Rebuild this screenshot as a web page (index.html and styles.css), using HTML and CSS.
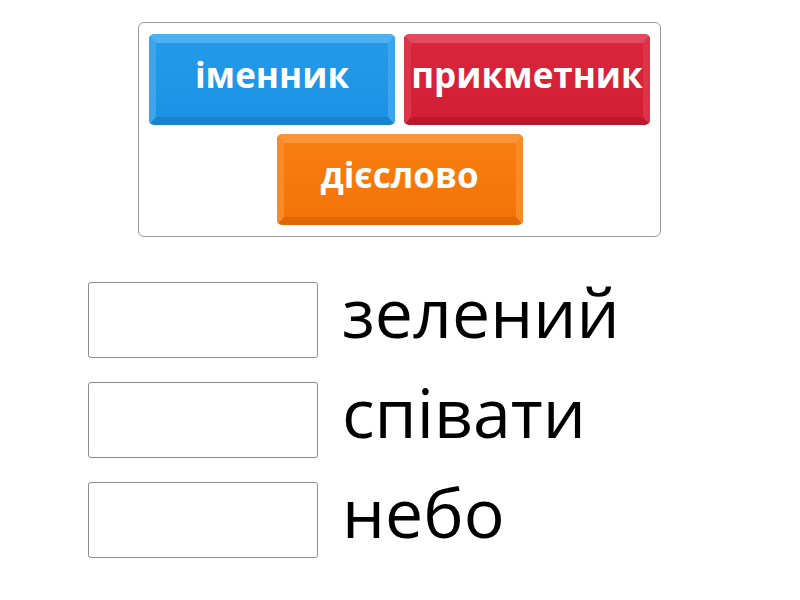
FILE: index.html
```html
<!DOCTYPE html>
<html lang="uk">
<head>
<meta charset="utf-8">
<title>Групування</title>
<link rel="stylesheet" href="styles.css">
</head>
<body>
<div class="page">
  <div class="bank">
    <div class="bank-row">
      <div class="tile tile-blue">іменник</div>
      <div class="tile tile-red">прикметник</div>
    </div>
    <div class="bank-row">
      <div class="tile tile-orange">дієслово</div>
    </div>
  </div>
  <div class="answers">
    <div class="answer"><div class="slot"></div><div class="word">зелений</div></div>
    <div class="answer"><div class="slot"></div><div class="word">співати</div></div>
    <div class="answer"><div class="slot"></div><div class="word">небо</div></div>
  </div>
</div>
</body>
</html>
```
FILE: styles.css
```css
html, body {
  margin: 0;
  padding: 0;
  background: #ffffff;
}
body {
  font-family: "Open Sans", "Noto Sans", sans-serif;
  width: 800px;
  height: 600px;
  overflow: hidden;
}
.page {
  display: flex;
  flex-direction: column;
  align-items: flex-start;
}
.bank {
  margin: 22px 0 0 138px;
  width: 523px;
  height: 215px;
  border: 1px solid #9a9a9a;
  border-radius: 6px;
  padding: 11px 10px;
  box-sizing: border-box;
  display: flex;
  flex-direction: column;
  align-items: center;
  gap: 9px;
}
.bank-row {
  display: flex;
  gap: 9px;
  justify-content: center;
}
.tile {
  width: 246px;
  height: 91px;
  box-sizing: border-box;
  border-radius: 5px;
  border-style: solid;
  border-width: 9px 7px 8px 7px;
  display: flex;
  align-items: center;
  justify-content: center;
  color: #ffffff;
  font-weight: 700;
  font-size: 35px;
  letter-spacing: 0;
  padding-bottom: 11px;
  white-space: nowrap;
}
.tile-blue {
  background: linear-gradient(#249be9, #1c92e4);
  border-color: #4cb0f1 #3aa6ee #1883cf #3aa6ee;
}
.tile-red {
  background: linear-gradient(#da263c, #d21f35);
  border-color: #e34a5d #dc3549 #b91a2d #dc3549;
}
.tile-orange {
  background: linear-gradient(#f87d10, #f47408);
  border-color: #fa9436 #f98a25 #df6804 #f98a25;
}
.answers {
  margin: 45px 0 0 88px;
  display: flex;
  flex-direction: column;
  gap: 24px;
}
.answer {
  display: flex;
  align-items: flex-start;
  gap: 24px;
  height: 76px;
}
.slot {
  width: 230px;
  height: 76px;
  box-sizing: border-box;
  border: 1px solid #8c8c8c;
  border-radius: 3px;
  background: #ffffff;
}
.word {
  font-size: 68px;
  line-height: 60px;
  color: #000000;
  white-space: nowrap;
}
```
